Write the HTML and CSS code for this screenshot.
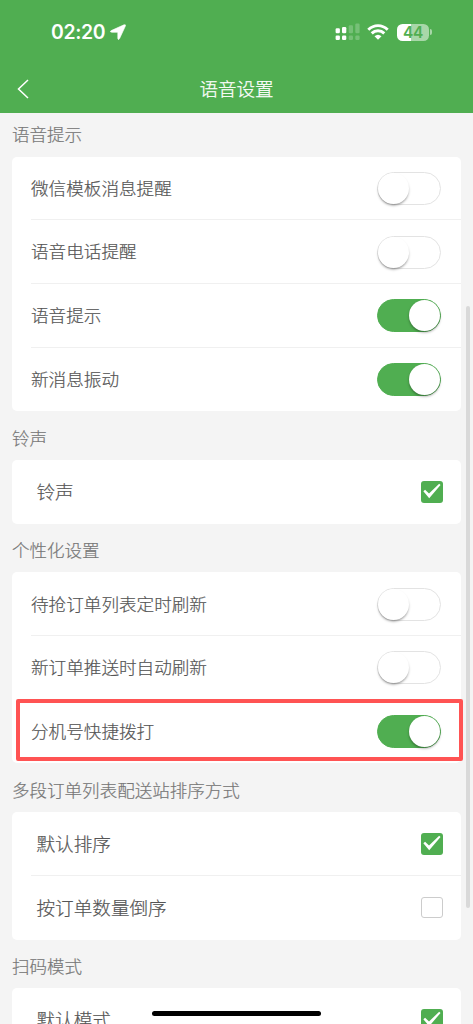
FILE: index.html
```html
<!DOCTYPE html>
<html lang="zh-CN">
<head>
<meta charset="utf-8">
<title>语音设置</title>
<link rel="stylesheet" href="styles.css">
</head>
<body>
<div class="screen">
  <header class="header">
    <div class="status">
      <span class="time">02:20</span>
      <svg class="location" viewBox="0 0 16 16"><path d="M1.2 6.6 14 .8Q16 .2 15.4 2L9.6 14.6Q8.3 16.8 7.8 14.4V9Q7.8 8.3 7.1 8.3H2Q-.9 8 1.2 6.6Z" fill="#fff" stroke="#fff" stroke-width=".6"/></svg>
      <svg class="signal" viewBox="0 0 25 18">
        <g fill="#fff"><rect x=".6" y="5.2" width="4.3" height="5" rx="1.2"/><rect x="7" y="4" width="4.3" height="6.2" rx="1.2"/><rect x=".6" y="12.6" width="4.3" height="4.3" rx="1.2"/><rect x="7" y="12.6" width="4.3" height="4.3" rx="1.2"/></g>
        <g fill="#fff" opacity=".22"><rect x="13.7" y="2.2" width="4.3" height="8" rx="1.2"/><rect x="20.3" y=".5" width="4.3" height="9.7" rx="1.2"/><rect x="13.7" y="12.6" width="4.3" height="4.3" rx="1.2"/><rect x="20.3" y="12.6" width="4.3" height="4.3" rx="1.2"/></g>
      </svg>
      <svg class="wifi" viewBox="0 0 22 16"><g fill="none" stroke="#fff" stroke-width="2.9"><path d="M1.3 5.8Q5.5 1.6 11 1.6T20.7 5.8"/><path d="M4.7 9.4Q7.4 6.7 11 6.7T17.3 9.4"/></g><path d="M7.5 12.2Q11 9.2 14.5 12.2L11 15.7Z" fill="#fff"/></svg>
      <div class="battery"><span class="battery-body">44</span><span class="battery-cap"></span></div>
    </div>
    <div class="navbar">
      <svg class="back" viewBox="0 0 12 20"><path d="M11 1 1.5 10 11 19" fill="none" stroke="#fff" stroke-width="1.5"/></svg>
      <h1 class="title">语音设置</h1>
    </div>
  </header>

  <main class="content">
    <h2 class="section-title first">语音提示</h2>
    <section class="card">
      <div class="row"><span>微信模板消息提醒</span><i class="switch"></i></div>
      <div class="row"><span>语音电话提醒</span><i class="switch"></i></div>
      <div class="row"><span>语音提示</span><i class="switch on"></i></div>
      <div class="row"><span>新消息振动</span><i class="switch on"></i></div>
    </section>
    <h2 class="section-title">铃声</h2>
    <section class="card">
      <div class="row option"><span>铃声</span><i class="check checked"><svg viewBox="0 0 22 22"><path d="M2.4 10.6 4.2 9 8.2 12.8 18.6 2.8 20 4 8.4 17.6Z" fill="#fff"/></svg></i></div>
    </section>
    <h2 class="section-title">个性化设置</h2>
    <section class="card">
      <div class="row"><span>待抢订单列表定时刷新</span><i class="switch"></i></div>
      <div class="row"><span>新订单推送时自动刷新</span><i class="switch"></i></div>
      <div class="row"><span>分机号快捷拨打</span><i class="switch on"></i><div class="highlight"></div></div>
    </section>
    <h2 class="section-title">多段订单列表配送站排序方式</h2>
    <section class="card">
      <div class="row option"><span>默认排序</span><i class="check checked"><svg viewBox="0 0 22 22"><path d="M2.4 10.6 4.2 9 8.2 12.8 18.6 2.8 20 4 8.4 17.6Z" fill="#fff"/></svg></i></div>
      <div class="row option"><span>按订单数量倒序</span><i class="check"></i></div>
    </section>
    <h2 class="section-title">扫码模式</h2>
    <section class="card">
      <div class="row option"><span>默认模式</span><i class="check checked"><svg viewBox="0 0 22 22"><path d="M2.4 10.6 4.2 9 8.2 12.8 18.6 2.8 20 4 8.4 17.6Z" fill="#fff"/></svg></i></div>
    </section>
  </main>
  <div class="scrollbar"></div>
  <div class="home-indicator"></div>
</div>
</body>
</html>
```
FILE: styles.css
```css
* { box-sizing: border-box; }
body {
  margin: 0;
  background: #f4f4f4;
  font-family: "Noto Sans CJK SC", sans-serif;
  font-weight: 300;
  color: #555;
}
.screen { position: relative; height: 1024px; overflow: hidden; }
.header { height: 113px; background: #50ae51; color: #fff; }
.status { display: flex; align-items: center; height: 64px; padding: 0 42px 0 51px; }
.time { font: 600 19.4px/24px Inter, sans-serif; letter-spacing: -.35px; width: 54px; white-space: nowrap; }
.location { width: 16px; height: 16px; margin-left: 5px; }
.signal { width: 25px; height: 18px; margin-left: auto; }
.wifi { width: 22px; height: 16px; margin-left: 7px; }
.battery { display: flex; align-items: center; gap: 1px; margin-left: 8px; margin-right: -1px; }
.battery-body {
  width: 32px;
  height: 17px;
  border-radius: 5.5px;
  background: linear-gradient(90deg, #fff 44%, #a8d7a8 44%);
  color: #50ae51;
  font: 600 15.5px/17px Inter, sans-serif;
  letter-spacing: -.3px;
  text-align: center;
}
.battery-cap { width: 2px; height: 6px; border-radius: 0 2px 2px 0; background: #a8d7a8; }
.navbar { display: grid; grid-template-columns: 40px 1fr 40px; align-items: center; height: 49px; }
.back { width: 12px; height: 20px; margin: 1px 0 0 17px; }
.title { margin: 0; padding-bottom: 2px; font-size: 18.5px; font-weight: 300; line-height: 28px; text-align: center; -webkit-text-stroke: .25px currentColor; }
.content { padding: 0 12px; }
.section-title {
  margin: 0;
  padding-top: 4.5px;
  height: 48.85px;
  color: #777;
  font-size: 17.55px;
  font-weight: 300;
  line-height: 43.4px;
  -webkit-text-stroke: .2px currentColor;
}
.section-title.first { padding-top: 0; height: 43.6px; line-height: 42.4px; }
.card { background: #fff; border-radius: 5px; }
.row {
  position: relative;
  display: flex;
  align-items: center;
  justify-content: space-between;
  height: 63.65px;
  margin-left: 19px;
  padding-right: 20px;
  font-size: 17.6px;
  line-height: 28px;
}
.row > span { padding-bottom: 1.6px; -webkit-text-stroke: .2px currentColor; }
.row:not(:last-child) { box-shadow: inset 0 -1px #f0f0f0; }
.option { padding: 0 18.5px 0 5.5px; font-size: 18.6px; }
.switch {
  display: flex;
  width: 64px;
  height: 33px;
  border: 1px solid #e3e3e3;
  border-radius: 17px;
  background: #fff;
}
.switch::after {
  content: "";
  width: 31px;
  height: 31px;
  border-radius: 50%;
  background: #fff;
  box-shadow: 0 1.5px 2.5px rgba(0, 0, 0, .35);
}
.switch:not(.on)::after { box-shadow: 0 2px 2.5px -.5px rgba(0, 0, 0, .4); }
.switch.on { justify-content: flex-end; border-color: #50ae51; background: #50ae51; }
.check { width: 21.5px; height: 21.5px; border: 1px solid #ccc; border-radius: 3px; }
.checked { border: 0; background: #50ae51; }
.check svg { display: block; width: 100%; height: 100%; }
.highlight {
  position: absolute;
  inset: -.7px -2px 2.5px -15px;
  border: 4px solid #ff5353;
  border-radius: 2px;
}
.scrollbar { position: absolute; left: 466px; top: 306px; width: 4px; height: 602px; border-radius: 2px; background: #d9d9d9; }
.home-indicator { position: absolute; left: 152px; top: 1010.5px; width: 169px; height: 5.5px; border-radius: 3px; background: #000; }
```
